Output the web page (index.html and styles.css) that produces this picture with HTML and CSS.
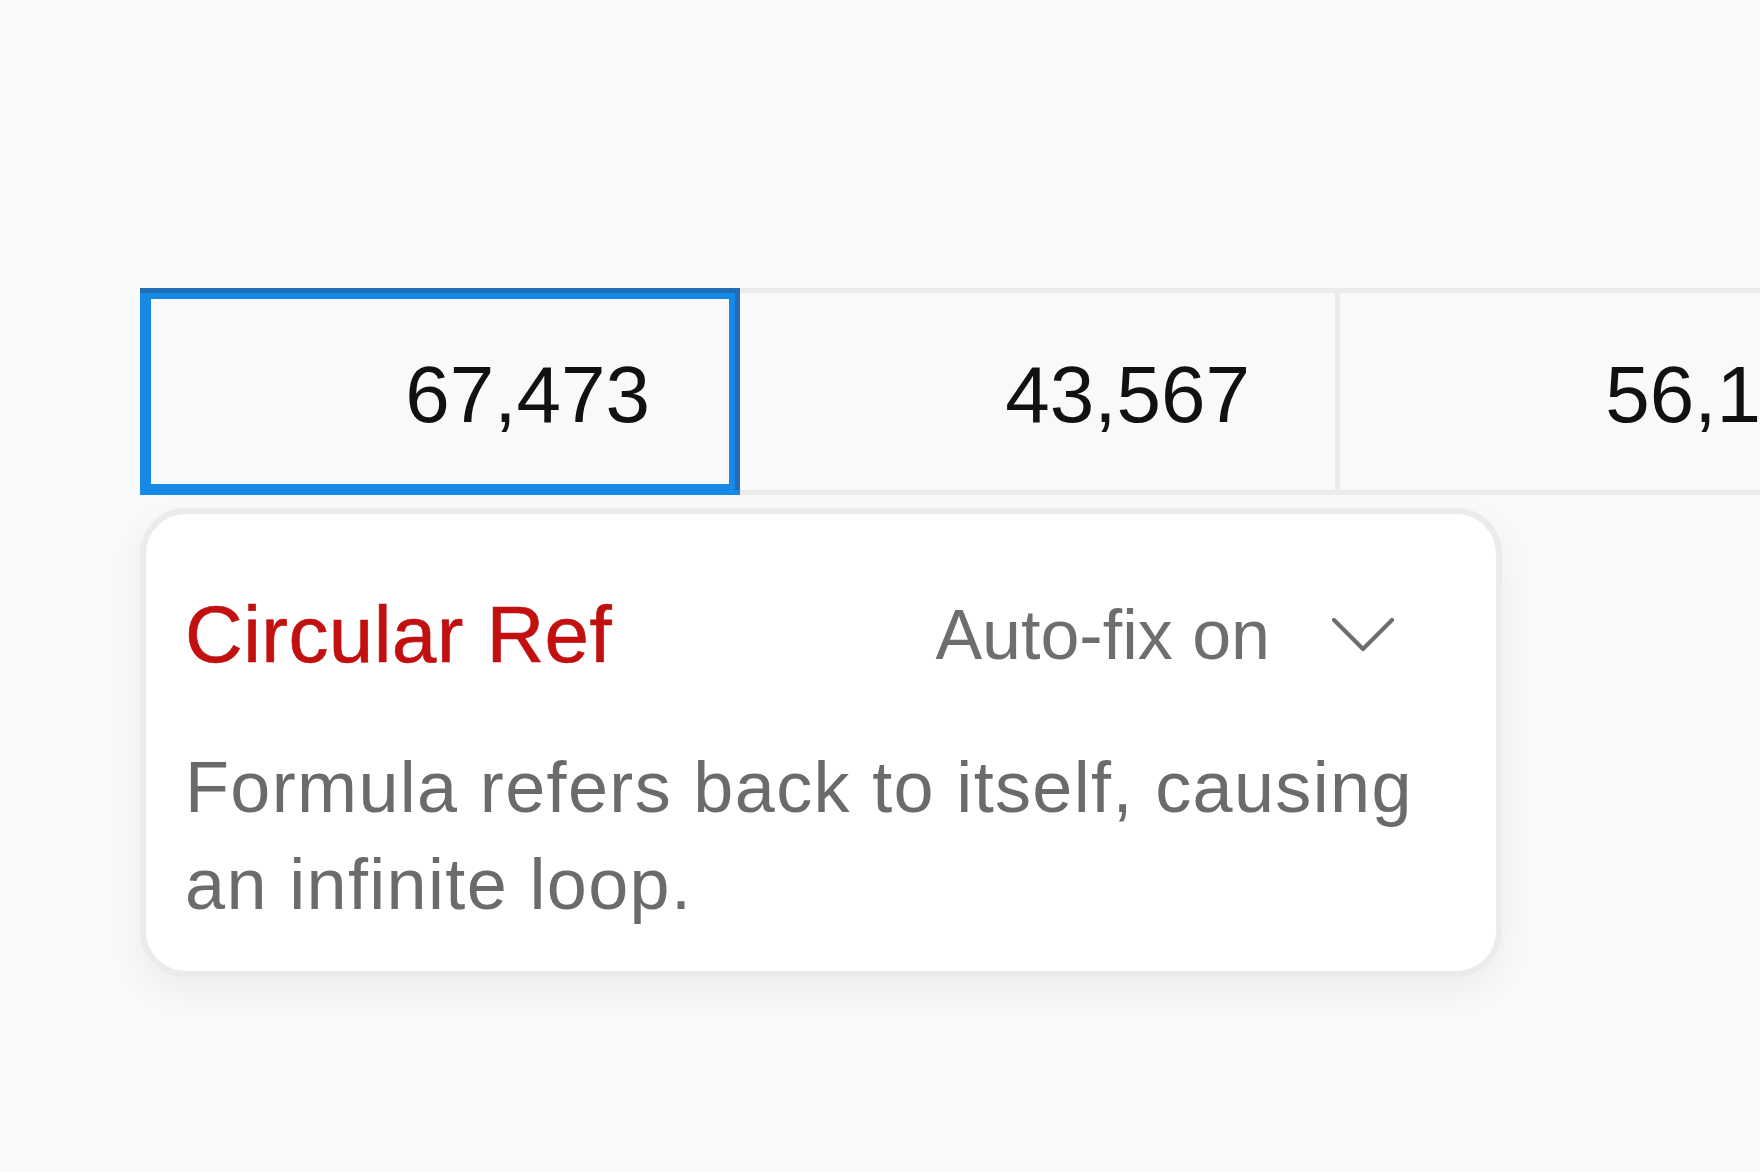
FILE: index.html
```html
<!DOCTYPE html>
<html lang="en">
<head>
<meta charset="utf-8">
<title>Circular Ref</title>
<link rel="stylesheet" href="styles.css">
</head>
<body>
  <main class="stage">
    <div class="row">
      <div class="cell selected"><span class="val">67,473</span></div>
      <div class="cell"><span class="val">43,567</span></div>
      <div class="cell"><span class="val">56,128</span></div>
    </div>
    <section class="card">
      <div class="card-head">
        <h2 class="title">Circular Ref</h2>
        <div class="autofix">
          <span class="autofix-label">Auto-fix on</span>
          <svg class="chev" width="62" height="34" viewBox="0 0 62 34" aria-hidden="true">
            <polyline points="2,2 31,31 60,2" fill="none" stroke="#6e6e6e" stroke-width="4.2" stroke-linecap="round" stroke-linejoin="round"/>
          </svg>
        </div>
      </div>
      <p class="desc">Formula refers back to itself, causing an infinite loop.</p>
    </section>
  </main>
</body>
</html>
```
FILE: styles.css
```css
html, body {
  margin: 0;
  padding: 0;
  background: #f9f9f9;
  overflow: hidden;
  width: 1760px;
  height: 1172px;
}

.stage {
  padding: 288px 0 0 140px;
  font-family: "Liberation Sans", Arial, sans-serif;
}

.row {
  display: flex;
  width: 1800px;
  border-top: 5px solid #ebebec;
  border-bottom: 5px solid #ebebec;
}

.cell {
  position: relative;
  flex: 0 0 600px;
  box-sizing: border-box;
  height: 197px;
  border-right: 5px solid #ebebec;
  display: flex;
  align-items: center;
  justify-content: flex-end;
  padding: 7px 85px 0 0;
}

.val {
  font-size: 80px;
  line-height: 80px;
  color: #111111;
}

.cell.selected::after {
  content: "";
  position: absolute;
  top: -5px;
  bottom: -5px;
  left: 0;
  right: -5px;
  border: 11px solid #1589e5;
}

.cell.selected::before {
  content: "";
  position: absolute;
  top: -5px;
  bottom: 0;
  left: 0;
  right: -5px;
  border-top: 5px solid #1f6db3;
  border-right: 5px solid #1f6db3;
  z-index: 2;
}

.card {
  width: 1362px;
  box-sizing: border-box;
  margin-top: 13px;
  background: #ffffff;
  border: 6px solid #ebebec;
  border-radius: 46px;
  padding: 81px 39px 38px 39px;
  box-shadow: 0 14px 34px rgba(0, 0, 0, 0.05);
}

.card-head {
  display: flex;
  align-items: center;
  justify-content: space-between;
  height: 80px;
  padding-right: 63px;
}

.title {
  margin: 0;
  font-weight: normal;
  font-size: 80px;
  line-height: 80px;
  letter-spacing: 0.4px;
  color: #c21010;
  -webkit-text-stroke: 0.6px #c21010;
}

.autofix {
  display: flex;
  align-items: center;
  gap: 62px;
}

.autofix-label {
  font-size: 70px;
  line-height: 80px;
  color: #6e6e6e;
}

.chev {
  display: block;
}

.desc {
  margin: 64px 0 0 0;
  font-size: 72px;
  line-height: 97px;
  letter-spacing: 1.35px;
  color: #6b6b6b;
}
```
